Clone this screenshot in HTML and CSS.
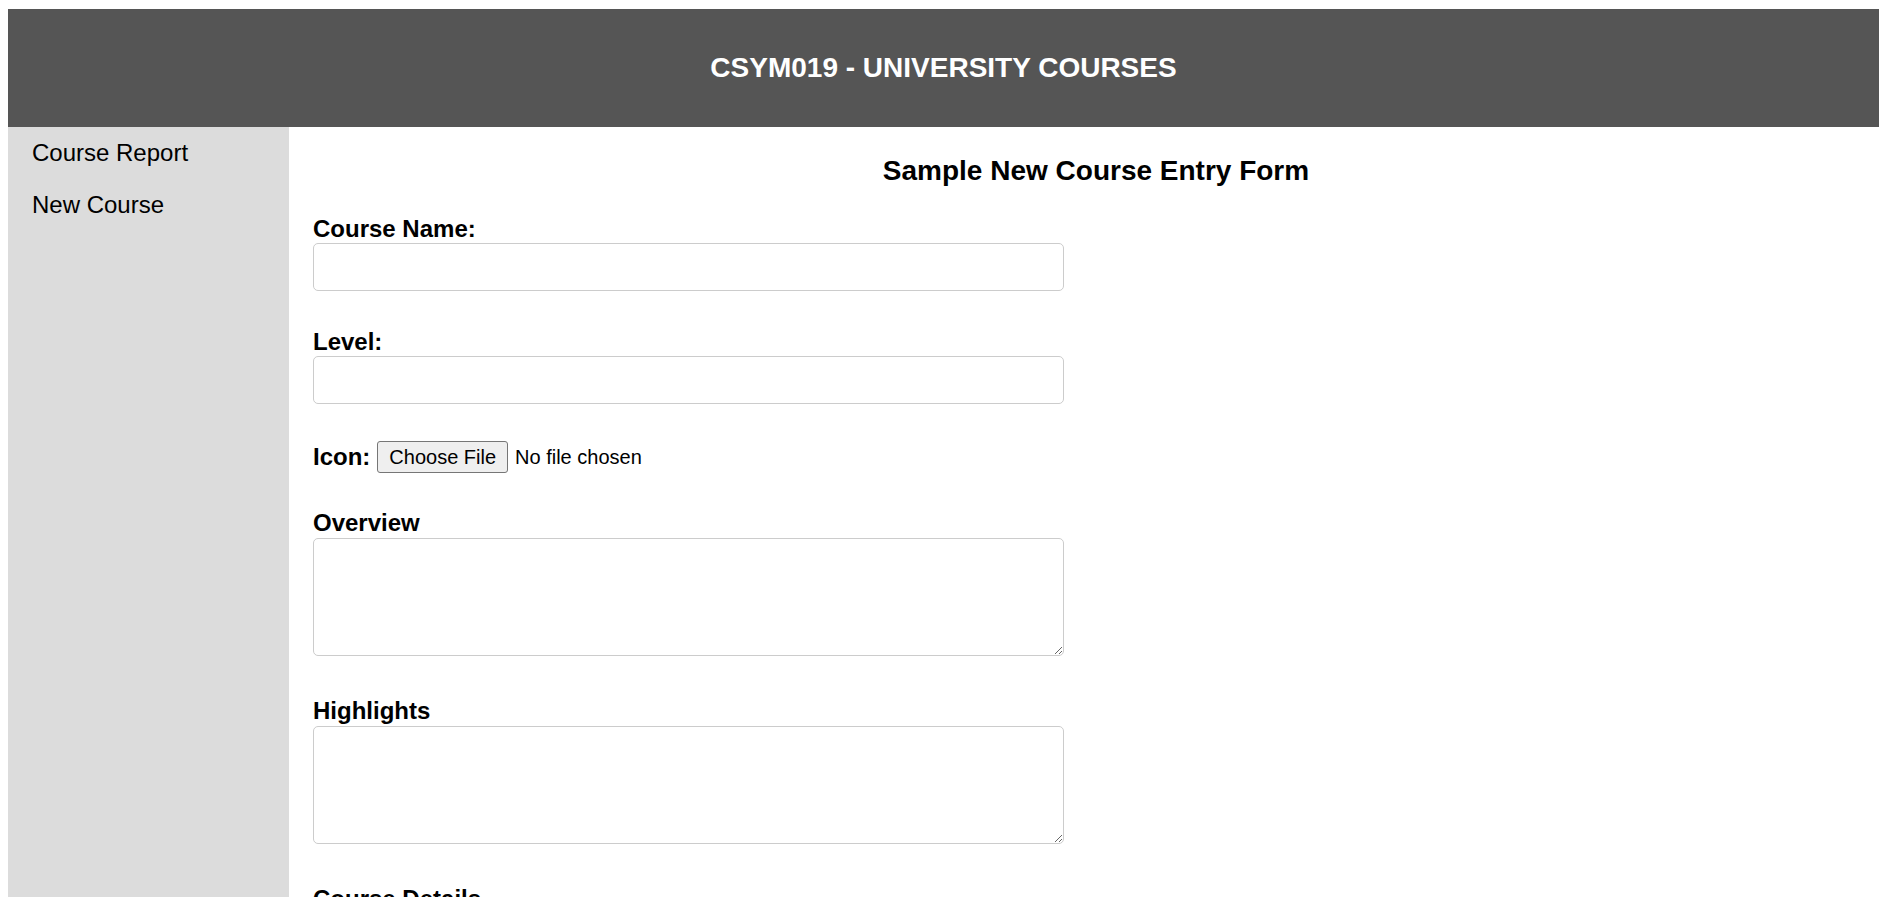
FILE: index.html
```html
<!DOCTYPE html>
<html lang="en">
<head>
<meta charset="utf-8">
<title>CSYM019 - University Courses</title>
<link rel="stylesheet" href="styles.css">
</head>
<body>
<header class="top-bar">
  <h1 class="site-title">CSYM019 - UNIVERSITY COURSES</h1>
</header>
<div class="layout">
  <nav class="side-nav">
    <ul class="nav-list">
      <li><a class="nav-link" href="#">Course Report</a></li>
      <li><a class="nav-link" href="#">New Course</a></li>
    </ul>
  </nav>
  <main class="content">
    <h2 class="form-title">Sample New Course Entry Form</h2>
    <form class="course-form">
      <div class="field">
        <label class="field-label" for="cname">Course Name:</label>
        <input class="text-input" type="text" id="cname">
      </div>
      <div class="field">
        <label class="field-label" for="level">Level:</label>
        <input class="text-input" type="text" id="level">
      </div>
      <div class="field file-row">
        <label class="field-label inline-label" for="icon">Icon:</label>
        <input class="file-input" type="file" id="icon">
      </div>
      <div class="field">
        <label class="field-label" for="overview">Overview</label>
        <textarea class="text-area" id="overview"></textarea>
      </div>
      <div class="field area-gap">
        <label class="field-label" for="highlights">Highlights</label>
        <textarea class="text-area" id="highlights"></textarea>
      </div>
      <div class="field area-gap">
        <label class="field-label" for="details">Course Details</label>
        <textarea class="text-area" id="details"></textarea>
      </div>
    </form>
  </main>
</div>
</body>
</html>
```

FILE: styles.css
```css
* {
  box-sizing: border-box;
}

html, body {
  background: #ffffff;
}

body {
  margin: 9px 6px 0 8px;
  font-family: "Liberation Sans", Arial, sans-serif;
  color: #000000;
}

.top-bar {
  background: #555555;
  padding: 43px 0 43px;
  text-align: center;
}

.site-title {
  margin: 0;
  font-size: 28px;
  line-height: 32px;
  font-weight: bold;
  color: #ffffff;
}

.layout {
  display: grid;
  grid-template-columns: 281px 1fr;
  min-height: 1200px;
}

.side-nav {
  background: #dcdcdc;
}

.nav-list {
  list-style: none;
  margin: 0;
  padding: 12px 0 0 24px;
  display: flex;
  flex-direction: column;
  gap: 24px;
}

.nav-link {
  font-size: 24px;
  line-height: 28px;
  color: #000000;
  text-decoration: none;
  display: block;
}

.content {
  padding: 28px 0 0 24px;
}

.form-title {
  margin: 0;
  font-size: 28px;
  line-height: 32px;
  font-weight: bold;
  text-align: center;
}

.course-form {
  display: flex;
  flex-direction: column;
  margin-top: 28px;
  gap: 37px;
}

.field {
  display: flex;
  flex-direction: column;
  align-items: flex-start;
}

.area-gap {
  margin-top: 4px;
}

.field-label {
  font-size: 24px;
  line-height: 28px;
  font-weight: bold;
}

.text-input {
  width: 751px;
  height: 48px;
  border: 1px solid #cccccc;
  border-radius: 5px;
  font-size: 20px;
  font-family: "Liberation Sans", Arial, sans-serif;
  padding: 0 10px;
  background: #ffffff;
}

.text-area {
  display: block;
  width: 751px;
  height: 118px;
  margin-top: 1px;
  border: 1px solid #cccccc;
  border-radius: 5px;
  font-size: 20px;
  font-family: "Liberation Sans", Arial, sans-serif;
  padding: 6px 10px;
  background: #ffffff;
}

.file-row {
  flex-direction: row;
  align-items: center;
  height: 32px;
  margin-bottom: -1px;
}

.inline-label {
  margin-right: 7px;
}

.file-input {
  font-size: 20px;
  font-family: "Liberation Sans", Arial, sans-serif;
  color: #000000;
  line-height: 23px;
}

.file-input::file-selector-button {
  font-size: 20px;
  font-family: "Liberation Sans", Arial, sans-serif;
  height: 32px;
  padding: 0 11px;
  margin: 0 7px 0 0;
  background: #efefef;
  border: 1px solid #767676;
  border-radius: 3px;
  color: #000000;
}
```
